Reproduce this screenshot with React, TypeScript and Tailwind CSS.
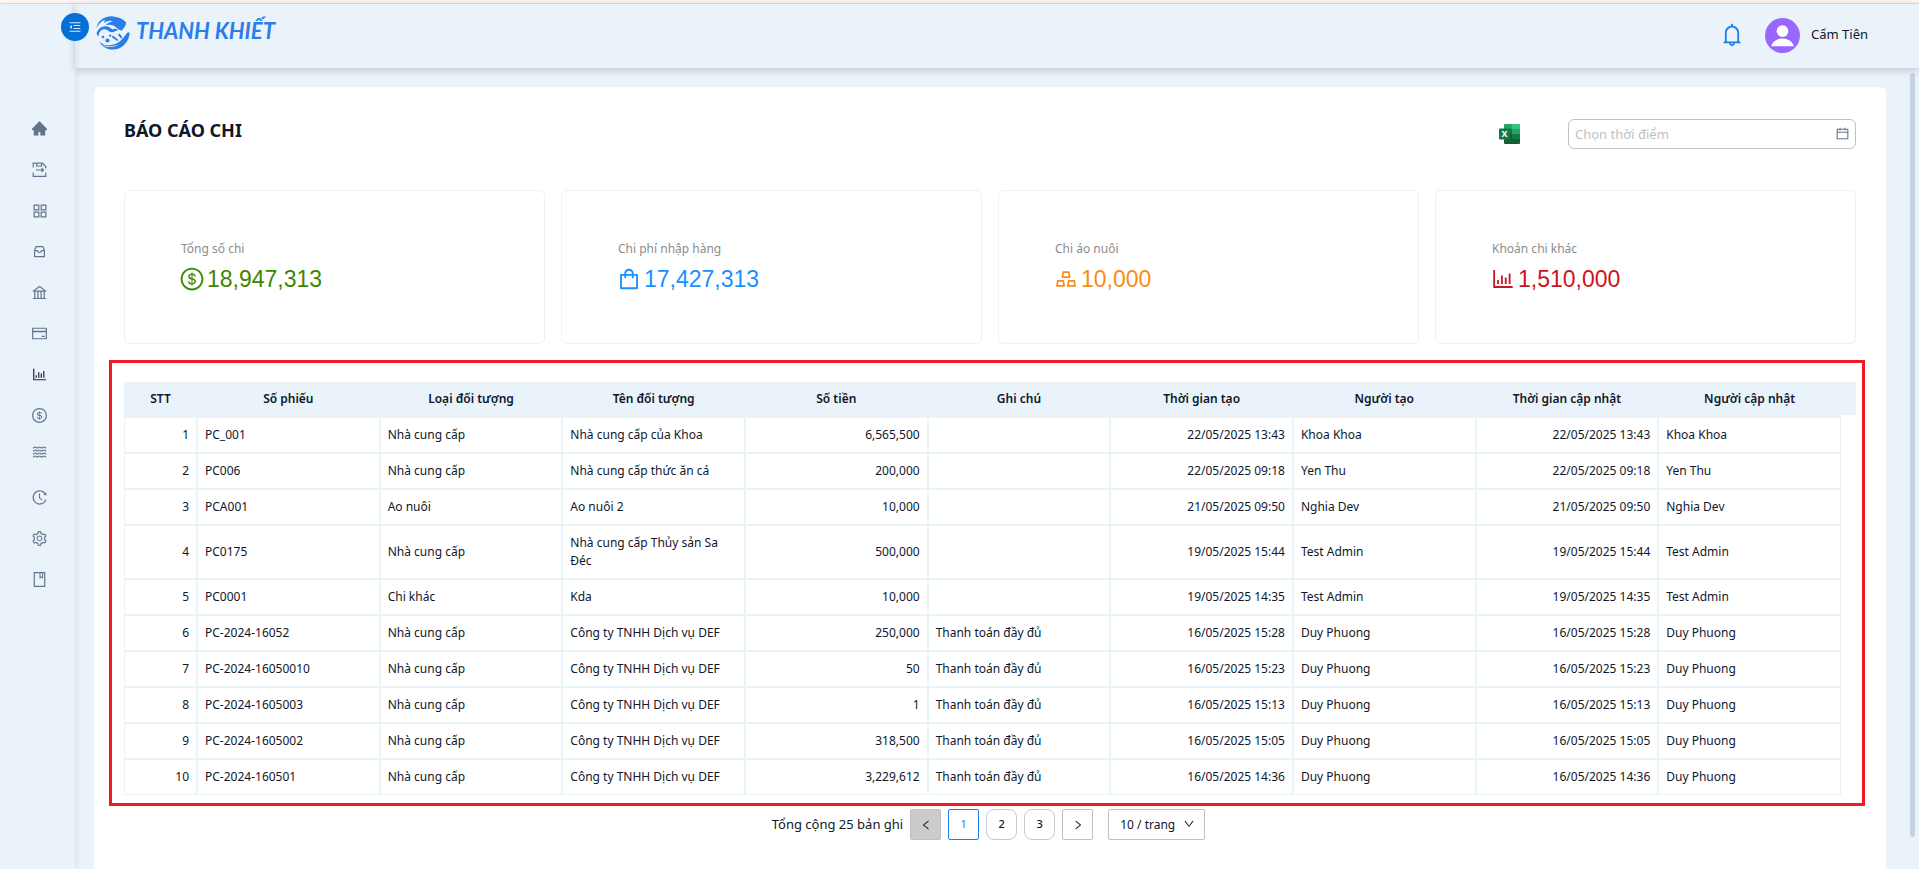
import React from "react";
import {
  AiFillHome,
  AiOutlineAppstore,
  AiOutlineBank,
  AiOutlineBarChart,
  AiOutlineBell,
  AiOutlineBook,
  AiOutlineCalendar,
  AiOutlineCreditCard,
  AiOutlineDollar,
  AiOutlineDown,
  AiOutlineGold,
  AiOutlineHistory,
  AiOutlineLeft,
  AiOutlineMenuFold,
  AiOutlineRight,
  AiOutlineSetting,
  AiOutlineShopping,
} from "react-icons/ai";

type IconProps = { size?: number };

const SaveIcon = ({ size = 17 }: IconProps) => (
  <svg width={size} height={size} viewBox="0 0 17 17" fill="none" stroke="currentColor" strokeWidth="1.2">
    <path d="M2.2 6.5V2.2h9.3l3.3 3.3v2M2.2 11.5v3.8h12.6v-3.8" />
    <path d="M5.6 2.4v2.6h5V2.4" />
    <path d="M5 9h7M10.4 7.2 12.6 9l-2.2 1.8" />
  </svg>
);

const InboxIcon = ({ size = 17 }: IconProps) => (
  <svg width={size} height={size} viewBox="0 0 17 17" fill="none" stroke="currentColor" strokeWidth="1.2">
    <path d="M3.6 7.2 5 3.6h7l1.4 3.6v6.4H3.6z" strokeLinejoin="round" />
    <path d="M3.6 7.6h2.9c.2 1.2.9 1.9 2 1.9s1.8-.7 2-1.9h2.9" />
  </svg>
);

const WaveIcon = ({ size = 17 }: IconProps) => (
  <svg width={size} height={size} viewBox="0 0 17 17" fill="none" stroke="currentColor" strokeWidth="1.2">
    {[4, 7, 10, 13].map((y) => (
      <path key={y} d={`M2 ${y}c1.1 0 1.1-1 2.2-1s1.1 1 2.2 1 1.1-1 2.2-1 1.1 1 2.2 1 1.1-1 2.2-1 1.1 1 2.2 1`} />
    ))}
  </svg>
);

const ExcelIcon = () => (
  <svg width="21" height="20" viewBox="0 0 21 20">
    <path d="M6 0h7v5H5V1a1 1 0 0 1 1-1z" fill="#21a366" />
    <path d="M13 0h7a1 1 0 0 1 1 1v4h-8z" fill="#33c481" />
    <path d="M5 5h8v5H5z" fill="#107c41" />
    <path d="M13 5h8v5h-8z" fill="#21a366" />
    <path d="M5 10h8v5H5z" fill="#185c37" />
    <path d="M13 10h8v5h-8z" fill="#107c41" />
    <path d="M5 15h16v4a1 1 0 0 1-1 1H6a1 1 0 0 1-1-1z" fill="#185c37" />
    <rect x="0" y="4.5" width="11" height="11" rx="1" fill="#107c41" />
    <text x="5.5" y="13.4" textAnchor="middle" fontSize="9" fontWeight="700" fill="#fff">
      X
    </text>
  </svg>
);

const LogoMark = () => (
  <svg width="34" height="34" viewBox="0 0 34 34" fill="#2b7de9">
    <path d="M9 3.2C15-.4 25 0 30 6.2c.3 2.6-1.7 5.600-4.600 8.600-3-.8-4.700-3.400-7.700-5-2.800-1.500-5.700-1.400-8.200-.2 2.400-3 4.800-4 7.500-4.300C14 4.200 11 4.800 8 7.200z" />
    <path d="M10.500.9C5.500 2.200 1.200 6.500.6 12.200 3 7.200 6.500 4 12.500 2.600L20 1C17 0 13.500.1 10.500.9z" />
    <path d="M.8 16.500c1.500-3.800 4.300-6 8.200-6.300 3-.2 5.400 1 7.400 3.400 2-1.200 4.200-1 6.200.6-2.800.2-4.200 1.800-6.400 2-1.800.2-3-.8-4.600-2-2.200-1.500-5-1.200-7 .8-1.300 1.300-2 3-2 5.400C.9 19.400.5 18 .8 16.500z" />
    <path d="M31.600 16.500c1.500-.6 2.300.4 2 1.800C32 27.500 25.200 33.800 16.600 33.600 10.500 33.500 6 30.200 3 25.400c3.500 3 6.600 4.200 10 3.900 5.600-.3 9.800-2.300 13.500-6.500 2-2.200 3.200-4.300 5.100-6.300z" />
    <path d="M17 19.500l5.500 4.600-1.300 1-5.500-3.800zM23.600 17.400l3 4-1.400 1.200-3.400-3.800z" />
    <circle cx="11.500" cy="24.500" r="2.100" />
    <circle cx="7" cy="21" r="1.300" />
    <circle cx="14.200" cy="19.600" r="1.200" />
    <path d="M5 28.400c5.500 3.500 13 3.400 19-.4-5.600 2.600-13 3-19 .4z" fill="#eaf3fa" />
  </svg>
);

const menuItems = [
  { label: "Trang chủ", icon: <AiFillHome size={17} /> },
  { label: "Phiếu", icon: <SaveIcon /> },
  { label: "Danh mục", icon: <AiOutlineAppstore size={18} /> },
  { label: "Kho", icon: <InboxIcon /> },
  { label: "Ngân hàng", icon: <AiOutlineBank size={17} /> },
  { label: "Thanh toán", icon: <AiOutlineCreditCard size={17} /> },
  { label: "Báo cáo", icon: <AiOutlineBarChart size={17} />, active: true },
  { label: "Thu chi", icon: <AiOutlineDollar size={17} /> },
  { label: "Ao nuôi", icon: <WaveIcon />, raised: true },
  { label: "Lịch sử", icon: <AiOutlineHistory size={17} /> },
  { label: "Cài đặt", icon: <AiOutlineSetting size={17} /> },
  { label: "Sổ tay", icon: <AiOutlineBook size={17} /> },
];

const stats = [
  { label: "Tổng số chi", value: "18,947,313", color: "text-[#3f8600]", icon: <AiOutlineDollar size={26} /> },
  { label: "Chi phí nhập hàng", value: "17,427,313", color: "text-[#1890ff]", icon: <AiOutlineShopping size={26} /> },
  { label: "Chi áo nuôi", value: "10,000", color: "text-[#fa8c16]", icon: <AiOutlineGold size={26} /> },
  { label: "Khoản chi khác", value: "1,510,000", color: "text-[#cf1322]", icon: <AiOutlineBarChart size={26} /> },
];

const columns = [
  "Số phiếu",
  "Loại đối tượng",
  "Tên đối tượng",
  "Số tiền",
  "Ghi chú",
  "Thời gian tạo",
  "Người tạo",
  "Thời gian cập nhật",
  "Người cập nhật",
];

const rows = [
  { code: "PC_001", type: "Nhà cung cấp", name: "Nhà cung cấp của Khoa", amount: "6,565,500", note: "", time: "22/05/2025 13:43", user: "Khoa Khoa" },
  { code: "PC006", type: "Nhà cung cấp", name: "Nhà cung cấp thức ăn cá", amount: "200,000", note: "", time: "22/05/2025 09:18", user: "Yen Thu" },
  { code: "PCA001", type: "Ao nuôi", name: "Ao nuôi 2", amount: "10,000", note: "", time: "21/05/2025 09:50", user: "Nghia Dev" },
  { code: "PC0175", type: "Nhà cung cấp", name: "Nhà cung cấp Thủy sản Sa Đéc", amount: "500,000", note: "", time: "19/05/2025 15:44", user: "Test Admin" },
  { code: "PC0001", type: "Chi khác", name: "Kda", amount: "10,000", note: "", time: "19/05/2025 14:35", user: "Test Admin" },
  { code: "PC-2024-16052", type: "Nhà cung cấp", name: "Công ty TNHH Dịch vụ DEF", amount: "250,000", note: "Thanh toán đầy đủ", time: "16/05/2025 15:28", user: "Duy Phuong" },
  { code: "PC-2024-16050010", type: "Nhà cung cấp", name: "Công ty TNHH Dịch vụ DEF", amount: "50", note: "Thanh toán đầy đủ", time: "16/05/2025 15:23", user: "Duy Phuong" },
  { code: "PC-2024-1605003", type: "Nhà cung cấp", name: "Công ty TNHH Dịch vụ DEF", amount: "1", note: "Thanh toán đầy đủ", time: "16/05/2025 15:13", user: "Duy Phuong" },
  { code: "PC-2024-1605002", type: "Nhà cung cấp", name: "Công ty TNHH Dịch vụ DEF", amount: "318,500", note: "Thanh toán đầy đủ", time: "16/05/2025 15:05", user: "Duy Phuong" },
  { code: "PC-2024-160501", type: "Nhà cung cấp", name: "Công ty TNHH Dịch vụ DEF", amount: "3,229,612", note: "Thanh toán đầy đủ", time: "16/05/2025 14:36", user: "Duy Phuong" },
];

const Cell = ({ children, right }: { children?: React.ReactNode; right?: boolean }) => (
  <td className={`border border-[#e9f4f9] px-[7px] py-2 leading-[18px] ${right ? "text-right" : "text-left"}`}>
    {children}
  </td>
);

const Sidebar = () => (
  <aside className="relative z-20 w-[75px] shrink-0 shadow-[2px_0_6px_rgba(0,21,41,0.06)]">
    <button
      type="button"
      aria-label="Thu gọn menu"
      className="absolute top-[9px] -right-[14px] flex size-7 items-center justify-center rounded-full bg-[#0270d7] text-[#d8eafa]"
    >
      <AiOutlineMenuFold size={14} />
    </button>
    <nav className="flex flex-col pt-[104px] pl-1">
      {menuItems.map((item) => (
        <a
          key={item.label}
          href="#"
          aria-label={item.label}
          className={`flex h-[41px] items-center justify-center ${item.active ? "text-[#1e293b]" : "text-[#64748b]"} ${
            item.raised ? "pb-2" : ""
          }`}
        >
          {item.icon}
        </a>
      ))}
    </nav>
  </aside>
);

const Header = () => (
  <header className="relative z-10 flex h-16 shrink-0 items-center justify-between bg-[#eaf3fa] pr-[51px] pb-0.5 pl-[21px] shadow-[0_2px_8px_rgba(0,21,41,0.2)]">
    <a href="#" className="flex items-center gap-[6px] pb-1">
      <LogoMark />
      <span className="pb-1 font-['Lato'] text-[22px] leading-8 font-bold text-[#2b7de9] italic">THANH KHIẾT</span>
    </a>
    <div className="flex items-center">
      <button type="button" aria-label="Thông báo" className="mr-5 text-[#1f7fe8]">
        <AiOutlineBell size={26} />
      </button>
      <svg width="35" height="35" viewBox="0 0 36 36" className="mr-[11px]">
        <circle cx="18" cy="18" r="18" fill="#9966ff" />
        <circle cx="18" cy="13.5" r="6" fill="#fff" />
        <path d="M6.5 29c1-5 6-8 11.500-8s10.500 3 11.500 8z" fill="#fff" />
      </svg>
      <span className="text-[13px]">Cẩm Tiên</span>
    </div>
  </header>
);

const ReportTable = () => (
  <div className="mt-4 -mr-[9px] -ml-[15px] border-3 border-[#ed1c24] pt-[19px] pr-[6px] pb-2 pl-3">
    <table className="w-full table-fixed border-separate border-spacing-0 text-xs">
      <colgroup>
        <col className="w-[73px]" />
        {columns.map((col) => (
          <col key={col} />
        ))}
        <col className="w-[15px]" />
      </colgroup>
      <thead>
        <tr className="bg-[#eaf3fa]">
          <th className="border-b-2 border-[#eaf3fa] py-2 leading-[17px] font-semibold">STT</th>
          {columns.map((col) => (
            <th key={col} className="border-b-2 border-[#eaf3fa] py-2 leading-[17px] font-semibold">
              {col}
            </th>
          ))}
          <th className="border-b-2 border-white" />
        </tr>
      </thead>
      <tbody>
        {rows.map((row, index) => (
          <tr key={row.code}>
            <Cell right>{index + 1}</Cell>
            <Cell>{row.code}</Cell>
            <Cell>{row.type}</Cell>
            <Cell>{row.name}</Cell>
            <Cell right>{row.amount}</Cell>
            <Cell>{row.note}</Cell>
            <Cell right>{row.time}</Cell>
            <Cell>{row.user}</Cell>
            <Cell right>{row.time}</Cell>
            <Cell>{row.user}</Cell>
            <td />
          </tr>
        ))}
      </tbody>
    </table>
  </div>
);

const Pagination = () => (
  <div className="mt-[3px] flex items-center justify-center gap-[7px] pr-[3px]">
    <span className="text-[13px]">Tổng cộng 25 bản ghi</span>
    <button
      type="button"
      disabled
      aria-label="Trang trước"
      className="flex size-[31px] items-center justify-center rounded-xs border border-[#bfbfc4] bg-[#cbcbcb]"
    >
      <AiOutlineLeft size={12} />
    </button>
    <button type="button" className="size-[31px] rounded-xs border border-[#1f7fe8] text-[11px] text-[#1f7fe8]">
      1
    </button>
    <button type="button" className="size-[31px] rounded-lg border border-[#c9c9ce] text-[11px] font-medium">
      2
    </button>
    <button type="button" className="size-[31px] rounded-lg border border-[#c9c9ce] text-[11px] font-medium">
      3
    </button>
    <button
      type="button"
      aria-label="Trang sau"
      className="flex size-[31px] items-center justify-center rounded-xs border border-[#bfbfc4]"
    >
      <AiOutlineRight size={12} />
    </button>
    <div className="relative ml-2">
      <select
        aria-label="Số bản ghi mỗi trang"
        className="h-[31px] w-[97px] appearance-none rounded-xs border border-[#bfbfc4] bg-white pl-[11px] text-xs"
      >
        <option>10 / trang</option>
        <option>20 / trang</option>
        <option>50 / trang</option>
      </select>
      <AiOutlineDown size={12} className="pointer-events-none absolute top-[9px] right-[10px]" />
    </div>
  </div>
);

const App = () => {
  return (
    <div className="flex h-screen flex-col overflow-hidden bg-[#eaf3fa] font-['Noto_Sans','Open_Sans',sans-serif] text-[#0f172a]">
      {/* top strip */}
      <div className="h-1 shrink-0 border-b border-[#f3d3d0] bg-[#fdf6f4]" />
      <div className="flex min-h-0 flex-1">
        <Sidebar />
        <div className="flex min-w-0 flex-1 flex-col">
          <Header />
          <div className="flex min-h-0 flex-1">
            <main className="mt-[19px] ml-[19px] min-w-0 flex-1 rounded-t-md bg-white px-[30px] pt-8">
              {/* title and filters */}
              <div className="flex items-start justify-between">
                <h1 className="text-lg leading-[22px] font-bold">BÁO CÁO CHI</h1>
                <div className="flex items-center">
                  <button type="button" aria-label="Xuất Excel" className="mr-12">
                    <ExcelIcon />
                  </button>
                  <div className="relative">
                    <input
                      type="text"
                      aria-label="Chọn thời điểm"
                      placeholder="Chọn thời điểm"
                      className="block h-[30px] w-72 rounded-md border border-[#bfbfc4] px-[6px] text-[13px] outline-none placeholder:text-[#bfbfbf]"
                    />
                    <AiOutlineCalendar size={15} className="absolute top-[7px] right-[6px] text-[#64748b]" />
                  </div>
                </div>
              </div>
              {/* stat cards */}
              <div className="mt-[41px] grid grid-cols-4 gap-4">
                {stats.map((stat) => (
                  <div key={stat.label} className="rounded-md border border-[#f0f0f0] px-14 pt-12 pb-11">
                    <p className="text-xs leading-5 text-[#8c8c8c]">{stat.label}</p>
                    <div className={`-ml-0.5 flex h-10 items-center gap-0.5 ${stat.color}`}>
                      {stat.icon}
                      <span className="font-['Liberation_Sans',sans-serif] text-[23px] leading-10">{stat.value}</span>
                    </div>
                  </div>
                ))}
              </div>
              <ReportTable />
              <Pagination />
            </main>
            {/* scroll track */}
            <div className="flex w-[33px] shrink-0 justify-end pt-[5px] pr-1 pb-8">
              <div className="w-[5px] rounded-full bg-[#c6d3e1]" />
            </div>
          </div>
        </div>
      </div>
    </div>
  );
};

export default App;
